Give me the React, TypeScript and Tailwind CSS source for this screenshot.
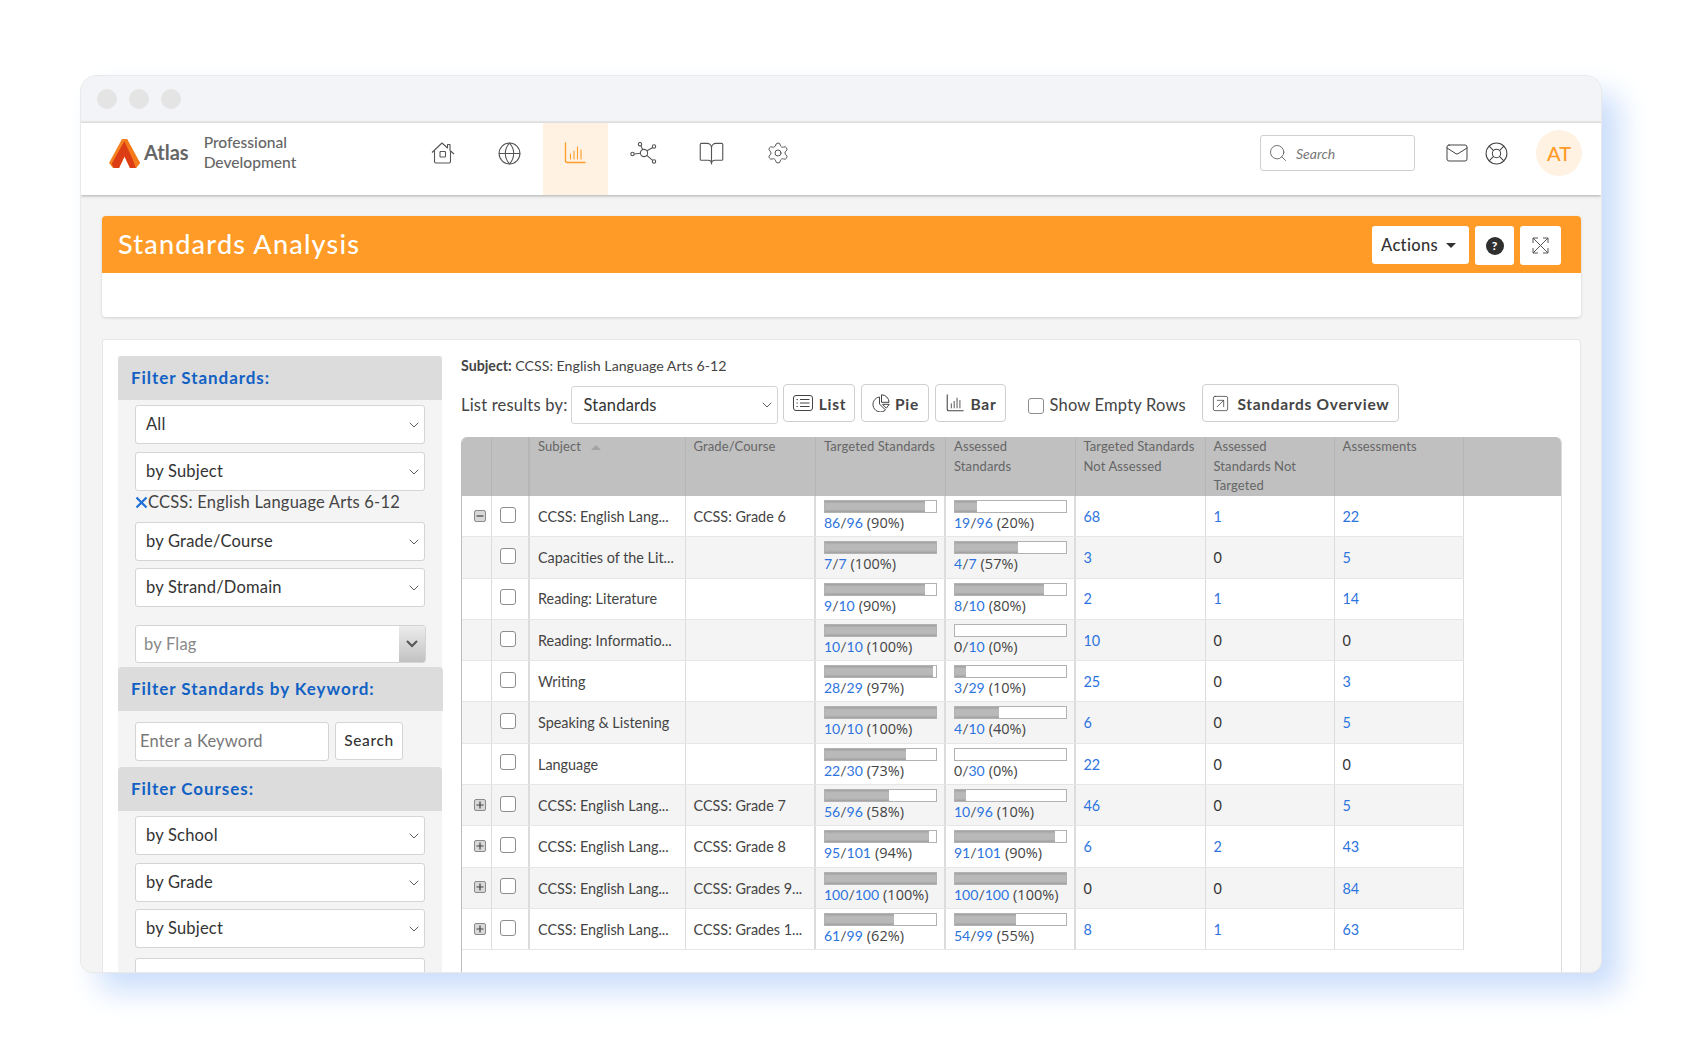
import React from "react";
import { BookOpen, ChevronDown, Globe, LifeBuoy, Mail, Search, Settings, SquareArrowUpRight } from "lucide-react";

const COLS = "grid grid-cols-[29.5px_38.5px_155.5px_130.5px_130px_129.5px_130px_129px_129px_97px]";
const INNER = "grid grid-cols-[29.5px_38.5px_155.5px_130.5px_130px_129.5px_130px_129px_129px]";
const BODY = "text-[16.5px] tracking-[0.2px]";

type Row = {
  exp?: "+" | "-";
  subject: string;
  grade?: string;
  t: [number, number, number];
  a: [number, number, number];
  tna: number;
  antt: number;
  n: number;
};

const rows: Row[] = [
  { exp: "-", subject: "CCSS: English Lang...", grade: "CCSS: Grade 6", t: [86, 96, 90], a: [19, 96, 20], tna: 68, antt: 1, n: 22 },
  { subject: "Capacities of the Lit...", t: [7, 7, 100], a: [4, 7, 57], tna: 3, antt: 0, n: 5 },
  { subject: "Reading: Literature", t: [9, 10, 90], a: [8, 10, 80], tna: 2, antt: 1, n: 14 },
  { subject: "Reading: Informatio...", t: [10, 10, 100], a: [0, 10, 0], tna: 10, antt: 0, n: 0 },
  { subject: "Writing", t: [28, 29, 97], a: [3, 29, 10], tna: 25, antt: 0, n: 3 },
  { subject: "Speaking & Listening", t: [10, 10, 100], a: [4, 10, 40], tna: 6, antt: 0, n: 5 },
  { subject: "Language", t: [22, 30, 73], a: [0, 30, 0], tna: 22, antt: 0, n: 0 },
  { exp: "+", subject: "CCSS: English Lang...", grade: "CCSS: Grade 7", t: [56, 96, 58], a: [10, 96, 10], tna: 46, antt: 0, n: 5 },
  { exp: "+", subject: "CCSS: English Lang...", grade: "CCSS: Grade 8", t: [95, 101, 94], a: [91, 101, 90], tna: 6, antt: 2, n: 43 },
  { exp: "+", subject: "CCSS: English Lang...", grade: "CCSS: Grades 9...", t: [100, 100, 100], a: [100, 100, 100], tna: 0, antt: 0, n: 84 },
  { exp: "+", subject: "CCSS: English Lang...", grade: "CCSS: Grades 1...", t: [61, 99, 62], a: [54, 99, 55], tna: 8, antt: 1, n: 63 },
];

function Logo() {
  return (
    <svg width="31" height="29" viewBox="0 0 31 29" className="shrink-0 mt-[4px]">
      <path d="M13 0H18L31 24L27 29H21L15.5 17.5L10 29H4L0 24Z" fill="#f5811f" />
      <path d="M15.5 2L23 17L27 29H21L15.5 17.5L10 29H5L2.5 25Z" fill="#dd3d14" />
      <path d="M18 0L31 24L27 29L24 21L15.5 2.5Z" fill="#f47a1c" />
    </svg>
  );
}

function HomeIcon() {
  return (
    <svg width="24" height="22" viewBox="0 0 24 22" fill="none" stroke="#555" strokeWidth="1.1" strokeLinejoin="round">
      <path d="M1 10.5L11 1L16.5 6V2.5H19V8.5L23 12" />
      <path d="M3.5 9V19.5Q3.5 21 5 21H18Q19.5 21 19.5 19.5V9" />
      <rect x="9" y="9.5" width="5.5" height="5.5" rx="0.8" />
    </svg>
  );
}

function ChartIcon({ color = "#555", size = 22 }: { color?: string; size?: number }) {
  return (
    <svg width={size} height={size} viewBox="0 0 22 22" fill="none" stroke={color} strokeWidth="1.1" strokeLinecap="round">
      <path d="M1.5 1V18.5Q1.5 20.5 3.5 20.5H21" strokeWidth="1.3" />
      <path d="M6.5 12V17M10 9V17M13.5 5V17M17 8V17" />
    </svg>
  );
}

function NetworkIcon() {
  return (
    <svg width="27" height="22" viewBox="0 0 27 22" fill="none" stroke="#555" strokeWidth="1.1">
      <circle cx="14" cy="11" r="3.6" />
      <circle cx="10" cy="2.2" r="1.7" />
      <circle cx="24" cy="4.5" r="1.7" />
      <circle cx="2.5" cy="12" r="1.7" />
      <circle cx="24" cy="19.5" r="1.7" />
      <path d="M11 4L12.7 7.7M22.7 5.5L17 8.7M4.2 12L10.4 11.3M22.6 18.4L16.8 13.4" />
    </svg>
  );
}

function ExpandIcon() {
  return (
    <svg width="17" height="17" viewBox="0 0 17 17" fill="none" stroke="#555" strokeWidth="1">
      <path d="M1 6V1H6M11 1H16V6M16 11V16H11M6 16H1V11M1 1L16 16M16 1L1 16" />
    </svg>
  );
}

function ListIcon() {
  return (
    <svg width="20" height="16" viewBox="0 0 20 16" fill="none" stroke="#444" strokeWidth="1">
      <rect x="0.5" y="0.5" width="19" height="15" rx="2.5" />
      <path d="M3.5 4.5H4.8M7 4.5H16.5M3.5 8H4.8M7 8H16.5M3.5 11.5H4.8M7 11.5H16.5" />
    </svg>
  );
}

function PieIcon() {
  return (
    <svg width="18" height="18" viewBox="0 0 18 18" fill="none" stroke="#444" strokeWidth="1">
      <path d="M7.5 3A7.5 7.5 0 1 0 13.5 16L7.5 10Z" />
      <path d="M9.5 0.8A7.5 7.5 0 0 1 17 8.3H9.5Z" />
      <path d="M10.5 10.3H17.2L14.4 14.2Z" />
    </svg>
  );
}

function Caret() {
  return <ChevronDown size={16} strokeWidth={1.1} className="text-[#222] shrink-0" />;
}

function SelectBox({ label, className = "" }: { label: string; className?: string }) {
  return (
    <div className={`mx-[17px] h-[39px] bg-white border border-[#d4d4d4] rounded-[3px] flex items-center justify-between pl-[10px] pr-[2px] text-[#333] ${BODY} ${className}`}>
      <span>{label}</span>
      <Caret />
    </div>
  );
}

function PanelHeader({ title, className = "" }: { title: string; className?: string }) {
  return (
    <div className={`h-[44px] bg-[#dcdcdc] rounded-t-[4px] pl-[13px] flex items-center text-[17px] font-bold tracking-[0.95px] text-[#1161c4] ${className}`}>
      {title}
    </div>
  );
}

function ToolButton({ icon, label, className = "" }: { icon: React.ReactNode; label: string; className?: string }) {
  return (
    <div className={`h-[38px] border border-[#cfcfcf] rounded-[4px] bg-white flex items-center justify-center font-bold text-[15.5px] tracking-[0.7px] text-[#444] ${className}`}>
      {icon}
      <span className="pt-[3px]">{label}</span>
    </div>
  );
}

function Progress({ v }: { v: [number, number, number] }) {
  return (
    <div className="pl-[8px] pt-[4px]">
      <div className="w-[113px] h-[13px] border border-[#b2b2b2] bg-white">
        <div
          className="h-full bg-[linear-gradient(#a0a0a0,#b9b9b9_25%,#b9b9b9_75%,#a0a0a0)]"
          style={{ width: `${v[2]}%` }}
        />
      </div>
      <div className="text-[14px] leading-[20px] text-[#444] whitespace-nowrap">
        <span className={v[0] === 0 ? "" : "text-[#2d74e0]"}>{v[0]}</span>/<span className="text-[#2d74e0]">{v[1]}</span>
        <span className="ml-[4px] [font-family:'Open_Sans',sans-serif] text-[14.5px]">({v[2]}%)</span>
      </div>
    </div>
  );
}

function Num({ v }: { v: number }) {
  return <span className={v === 0 ? "text-[#333]" : "text-[#2d74e0]"}>{v}</span>;
}

function ExpBox({ kind }: { kind: "+" | "-" }) {
  return (
    <svg width="12" height="12" viewBox="0 0 12 12" className="mt-[-1px]">
      <rect x="0.5" y="0.5" width="11" height="11" rx="1.5" fill="#d8d8d8" stroke="#8a8a8a" />
      <path d={kind === "+" ? "M2.5 6H9.5M6 2.5V9.5" : "M2.5 6H9.5"} stroke="#444" strokeWidth="1.2" />
    </svg>
  );
}

function Checkbox({ className = "" }: { className?: string }) {
  return <div className={`w-[16px] h-[16px] rounded-[3px] border border-[#8d8d8d] bg-white ${className}`} />;
}

function TableRow({ r, i }: { r: Row; i: number }) {
  const cell = "border-r border-[#dcdcdc] h-full";
  const text = `${cell} flex items-center pl-[8px] pt-[1px] text-[14.4px] text-[#444] whitespace-nowrap`;
  return (
    <div className={`${COLS} h-[41.3px]`}>
      <div className={`col-span-9 ${INNER} border-b border-[#e6e6e6] ${i % 2 ? "bg-[#f4f4f4]" : "bg-white"}`}>
        <div className={`${cell} flex items-center justify-end pr-[5px]`}>{r.exp && <ExpBox kind={r.exp} />}</div>
        <div className={`${cell} border-r-2 flex items-center justify-end pr-[12px]`}>
          <Checkbox className="mt-[-3px]" />
        </div>
        <div className={text}>{r.subject}</div>
        <div className={`${text} border-r-2`}>{r.grade}</div>
        <div className={`${cell} border-r-2`}><Progress v={r.t} /></div>
        <div className={`${cell} border-r-2`}><Progress v={r.a} /></div>
        <div className={text}><Num v={r.tna} /></div>
        <div className={text}><Num v={r.antt} /></div>
        <div className={text}><Num v={r.n} /></div>
      </div>
    </div>
  );
}

export default function App() {
  const hdr = "border-r border-[#b5b5b5] pl-[8px] pt-0 text-[13px] tracking-[0.1px] leading-[19.5px] text-[#666]";
  return (
    <div className="w-[1682px] h-[1058px] overflow-hidden bg-white pt-[75px] pl-[80px] [font-family:Lato,sans-serif]">
      <div className="w-[1522px] h-[898px] rounded-t-[16px] rounded-b-[12px] overflow-hidden bg-[#f4f4f4] border border-[#e9e9e9] shadow-[18px_18px_30px_#cbdefb]">
        {/* title bar */}
        <div className="h-[47px] bg-[#f3f4f8] border-b-2 border-[#e8e8e8] flex items-center gap-[12px] pl-[16px]">
          <div className="w-[20px] h-[20px] rounded-full bg-[#e4e4e4]" />
          <div className="w-[20px] h-[20px] rounded-full bg-[#e4e4e4]" />
          <div className="w-[20px] h-[20px] rounded-full bg-[#e4e4e4]" />
        </div>

        {/* nav */}
        <div className="h-[72px] bg-white flex items-stretch shadow-[0_1px_3px_#aaaaaa] relative">
          <div className="w-[328px] flex items-center pl-[28px] pb-[15px] shrink-0">
            <Logo />
            <span className="ml-[4px] text-[20px] font-bold text-[#666]">Atlas</span>
            <div className="ml-[15px] mt-[2px] text-[15.6px] leading-[19.5px] font-medium text-[#666]">
              <div>Professional</div>
              <div>Development</div>
            </div>
          </div>
          <div className="flex gap-[2px]">
            <div className="w-[65px] flex items-center justify-center pb-[12px] pl-[3px]"><HomeIcon /></div>
            <div className="w-[65px] flex items-center justify-center pb-[12px] pl-[1px]"><Globe size={25} strokeWidth={1} className="text-[#555]" /></div>
            <div className="w-[65px] flex items-center justify-center pb-[12px] pr-[2px] bg-[#fff2e3]"><ChartIcon color="#ff9b26" /></div>
            <div className="w-[65px] flex items-center justify-center pb-[12px] pl-[1px]"><NetworkIcon /></div>
            <div className="w-[65px] flex items-center justify-center pb-[12px] pl-[3px]"><BookOpen size={27} strokeWidth={1} className="text-[#555]" /></div>
            <div className="w-[65px] flex items-center justify-center pb-[12px] pl-[2px]"><Settings size={24} strokeWidth={1} className="text-[#555]" /></div>
          </div>
          <div className="ml-auto flex items-center pr-[19px] pb-[12px]">
            <div className="w-[155px] h-[36px] border border-[#cfcfcf] rounded-[3px] flex items-center pl-[7px]">
              <Search size={20} strokeWidth={1} className="text-[#555]" />
              <span className="ml-[8px] text-[14px] italic text-[#777]">Search</span>
            </div>
            <Mail size={24} strokeWidth={1} className="ml-[30px] text-[#444]" />
            <LifeBuoy size={25} strokeWidth={1} className="ml-[15px] text-[#444]" />
            <div className="ml-[27px] w-[46px] h-[46px] rounded-full bg-[#fff2e3] flex items-center justify-center text-[20px] font-medium text-[#ff9b26]">AT</div>
          </div>
        </div>

        {/* main */}
        <div className="pl-[21px] pr-[20px] pt-[21px]">
          <div className="h-[101px] bg-white rounded-[4px] shadow-[0_1px_3px_#d0d0d0]">
            <div className="h-[57px] bg-[#ff9b26] rounded-t-[4px] flex items-center pl-[16px] pr-[20px]">
              <span className="pb-[1px] text-[27px] font-medium tracking-[1.2px] text-white">Standards Analysis</span>
              <div className="ml-auto flex items-start gap-[6px] self-start pt-[10px]">
                <div className="w-[97px] h-[38px] bg-white rounded-[3px] flex items-center justify-center gap-[8px] pr-[4px] text-[16.5px] tracking-[0.3px] font-medium text-[#333]">
                  Actions
                  <span className="w-0 h-0 border-x-[5px] border-x-transparent border-t-[5px] border-t-[#333]" />
                </div>
                <div className="w-[39px] h-[39px] bg-white rounded-[3px] flex items-center justify-center">
                  <span className="w-[18px] h-[18px] rounded-full bg-[#2f2f2f] text-white text-[12px] font-black flex items-center justify-center">?</span>
                </div>
                <div className="w-[41px] h-[39px] bg-white rounded-[3px] flex items-center justify-center"><ExpandIcon /></div>
              </div>
            </div>
          </div>

          {/* card */}
          <div className="mt-[22px] h-[700px] bg-white border border-[#e6e6e6] rounded-[3px] flex pt-[16px] pl-[15px] pr-[18px]">
            {/* sidebar */}
            <div className="w-[324px] shrink-0 bg-[#f4f4f4] h-full">
              <PanelHeader title="Filter Standards:" />
              <SelectBox label="All" className="mt-[5px]" />
              <SelectBox label="by Subject" className="mt-[8px]" />
              <div className={`mx-[17px] h-[23px] flex items-center text-[#444] whitespace-nowrap ${BODY}`}>
                <svg width="13" height="13" viewBox="0 0 13 13" className="shrink-0"><path d="M1.5 1.5L11.5 11.5M11.5 1.5L1.5 11.5" stroke="#1f6fd6" strokeWidth="2.2" /></svg>
                <span>CCSS: English Language Arts 6-12</span>
              </div>
              <SelectBox label="by Grade/Course" className="mt-[8px]" />
              <SelectBox label="by Strand/Domain" className="mt-[7px]" />
              <div className={`mx-[17px] mr-[16px] mt-[18px] h-[38px] bg-white border border-[#d4d4d4] rounded-[3px] flex items-center text-[#888] pl-[8px] overflow-hidden ${BODY}`}>
                <span>by Flag</span>
                <div className="ml-auto w-[26px] h-full bg-[linear-gradient(#ececec,#c2c2c2)] flex items-center justify-center">
                  <svg width="14" height="8" viewBox="0 0 14 8"><path d="M2 1L7 6L12 1" fill="none" stroke="#555" strokeWidth="2" /></svg>
                </div>
              </div>
              <PanelHeader title="Filter Standards by Keyword:" className="mt-[4px] w-[325px]" />
              <div className="flex items-start mx-[17px] mt-[11px] gap-[6px]">
                <div className={`w-[194px] h-[39px] bg-white border border-[#d4d4d4] rounded-[3px] flex items-center pl-[4px] text-[#777] ${BODY}`}>Enter a Keyword</div>
                <div className="w-[68px] h-[38px] bg-white border border-[#d4d4d4] rounded-[3px] flex items-center justify-center text-[15.5px] font-medium tracking-[0.6px] text-[#333]">Search</div>
              </div>
              <PanelHeader title="Filter Courses:" className="mt-[6px] h-[43px]" />
              <SelectBox label="by School" className="mt-[5px]" />
              <SelectBox label="by Grade" className="mt-[8px]" />
              <SelectBox label="by Subject" className="mt-[7px]" />
              <div className={`mx-[17px] mt-[10px] h-[39px] bg-white border border-[#d4d4d4] rounded-[3px] pl-[4px] pt-[8px] text-[#777] ${BODY}`}>Type a Course Name</div>
            </div>

            {/* right */}
            <div className="ml-[19px] flex-1 min-w-0 flex flex-col">
              <div className="h-[20px] text-[14.2px] leading-[20px] text-[#444]"><span className="font-bold">Subject:</span> CCSS: English Language Arts 6-12</div>
              <div className="mt-[8px] h-[40px] flex items-start">
                <span className={`mt-[11px] leading-[20px] text-[#444] whitespace-nowrap ${BODY}`}>List results by:</span>
                <div className={`ml-[4px] mt-[2px] w-[207px] h-[38px] bg-white border border-[#d4d4d4] rounded-[3px] flex items-center justify-between pl-[11px] pr-[2px] text-[#333] ${BODY}`}>
                  <span>Standards</span>
                  <Caret />
                </div>
                <ToolButton icon={<ListIcon />} label="List" className="ml-[5px] w-[72px] gap-[6px]" />
                <ToolButton icon={<PieIcon />} label="Pie" className="ml-[6px] w-[68px] gap-[5px]" />
                <ToolButton icon={<ChartIcon color="#444" size={18} />} label="Bar" className="ml-[6px] w-[71px] gap-[7px]" />
                <Checkbox className="ml-[22px] mt-[14px]" />
                <span className={`ml-[5px] mt-[11px] leading-[20px] text-[#444] whitespace-nowrap ${BODY}`}>Show Empty Rows</span>
                <ToolButton icon={<SquareArrowUpRight size={19} strokeWidth={1} />} label="Standards Overview" className="ml-[16px] w-[197px] gap-[7px]" />
              </div>

              {/* table */}
              <div className="mt-[13px] flex-1 border-x border-l-[#bdbdbd] border-r-[#dcdcdc] rounded-t-[6px] overflow-hidden">
                <div className={`${COLS} h-[59px] bg-[#c0c0c0]`}>
                  <div className={hdr} />
                  <div className={`${hdr} border-r-2`} />
                  <div className={hdr}>Subject <span className="inline-block ml-[7px] mb-[1px] w-0 h-0 border-x-[5px] border-x-transparent border-b-[5px] border-b-[#a3a3a3]" /></div>
                  <div className={hdr}>Grade/Course</div>
                  <div className={hdr}>Targeted Standards</div>
                  <div className={hdr}>Assessed<br />Standards</div>
                  <div className={hdr}>Targeted Standards<br />Not Assessed</div>
                  <div className={hdr}>Assessed<br />Standards Not<br />Targeted</div>
                  <div className={hdr}>Assessments</div>
                  <div />
                </div>
                {rows.map((r, i) => (
                  <TableRow key={i} r={r} i={i} />
                ))}
              </div>
            </div>
          </div>
        </div>
      </div>
    </div>
  );
}
